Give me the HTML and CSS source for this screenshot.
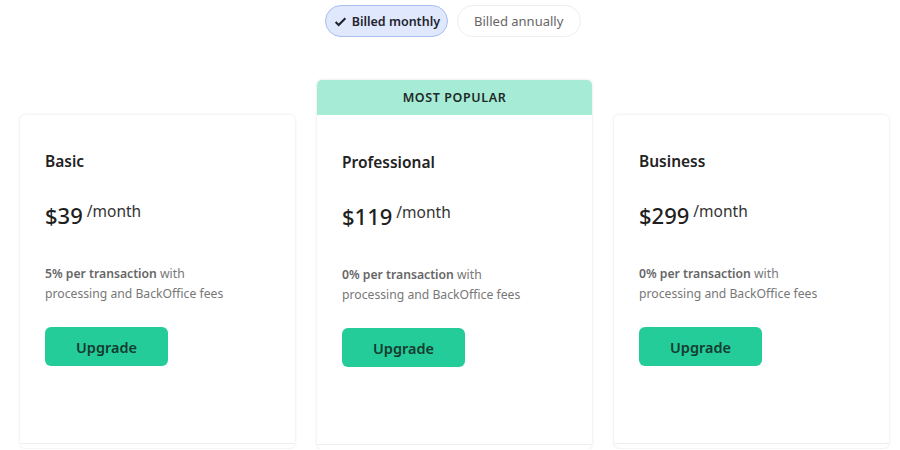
FILE: index.html
```html
<!DOCTYPE html>
<html lang="en">
<head>
  <meta charset="UTF-8">
  <title>Pricing</title>
  <meta name="viewport" content="width=device-width, initial-scale=1.0">
  <link rel="stylesheet" href="styles.css">
</head>
<body>
  <div class="billing">
    <button class="pill active">
      <svg class="check" viewBox="0 0 16 16" width="13" height="13"><path d="M2 8.5l3.8 3.8L14 4" fill="none" stroke="#1f2430" stroke-width="2.6"/></svg>
      Billed monthly
    </button>
    <button class="pill">Billed annually</button>
  </div>

  <div class="plans">
    <div class="plan">
      <div class="plan-body">
        <h3>Basic</h3>
        <div class="price"><span class="amount">$39</span><span class="per">/month</span></div>
        <p class="desc"><b>5% per transaction</b> with processing and BackOffice fees</p>
        <button class="upgrade">Upgrade</button>
      </div>
      <div class="plan-foot"></div>
    </div>

    <div class="plan featured">
      <div class="badge">MOST POPULAR</div>
      <div class="plan-body">
        <h3>Professional</h3>
        <div class="price"><span class="amount">$119</span><span class="per">/month</span></div>
        <p class="desc"><b>0% per transaction</b> with processing and BackOffice fees</p>
        <button class="upgrade">Upgrade</button>
      </div>
      <div class="plan-foot"></div>
    </div>

    <div class="plan">
      <div class="plan-body">
        <h3>Business</h3>
        <div class="price"><span class="amount">$299</span><span class="per">/month</span></div>
        <p class="desc"><b>0% per transaction</b> with processing and BackOffice fees</p>
        <button class="upgrade">Upgrade</button>
      </div>
      <div class="plan-foot"></div>
    </div>
  </div>
</body>
</html>
```

FILE: styles.css
```css
body {
  margin: 0; background: #fff; color: #222;
  font-family: "Noto Sans", "Open Sans", sans-serif;
  overflow: hidden;
}
.billing {
  display: flex; justify-content: center; gap: 9px;
  padding-top: 5px; padding-left: 6px;
}
.pill {
  height: 32px; padding: 0 17px 0 16px; border-radius: 16px;
  border: 1px solid #eeeeee; background: #fff; color: #666;
  font-family: inherit; font-size: 13px;
  display: flex; align-items: center; gap: 5px;
}
.pill.active {
  background: #dfe8fc; border-color: #a9bff0; color: #1f2430;
  font-size: 12.5px; font-weight: 600; padding: 0 7px 0 8px;
}
.plans {
  display: grid; grid-template-columns: repeat(3, 275px); gap: 22px;
  padding: 43px 0 0 20px; align-items: start;
}
.plan {
  background: #fff; border-radius: 5px;
  box-shadow: 0 0 3px rgba(0,0,0,0.12);
  margin-top: 35px;
}
.plan.featured { margin-top: 0; }
.badge {
  height: 35px; background: #a6ebd6; border-radius: 5px 5px 0 0;
  display: flex; align-items: center; justify-content: center;
  font-size: 12.5px; font-weight: 600; letter-spacing: 0.6px; color: #1e2a26;
}
.plan-body { padding: 35px 25px 0 25px; height: 293px; }
.featured .plan-body { padding-top: 36px; }
.plan h3 { margin: 0; font-size: 15.5px; font-weight: 600; line-height: 22px; color: #222; }
.price { margin-top: 28px; display: flex; align-items: flex-start; line-height: 30px; }
.amount { font-size: 22px; font-weight: 500; color: #1f1f1f; }
.per { font-size: 15.5px; margin-left: 4px; line-height: 22px; color: #333; }
.desc {
  margin: 34px 0 0 0; font-size: 12.2px; line-height: 20px; color: #777; width: 200px;
}
.desc b { font-weight: 600; color: #666; }
.upgrade {
  margin-top: 23px; width: 123px; height: 39px; border: none; border-radius: 6px;
  background: #23cc98; color: #163b30; font-family: inherit;
  font-size: 14.5px; font-weight: 600;
}
.plan-foot { border-top: 1px solid #eeeeee; height: 4px; }
```
